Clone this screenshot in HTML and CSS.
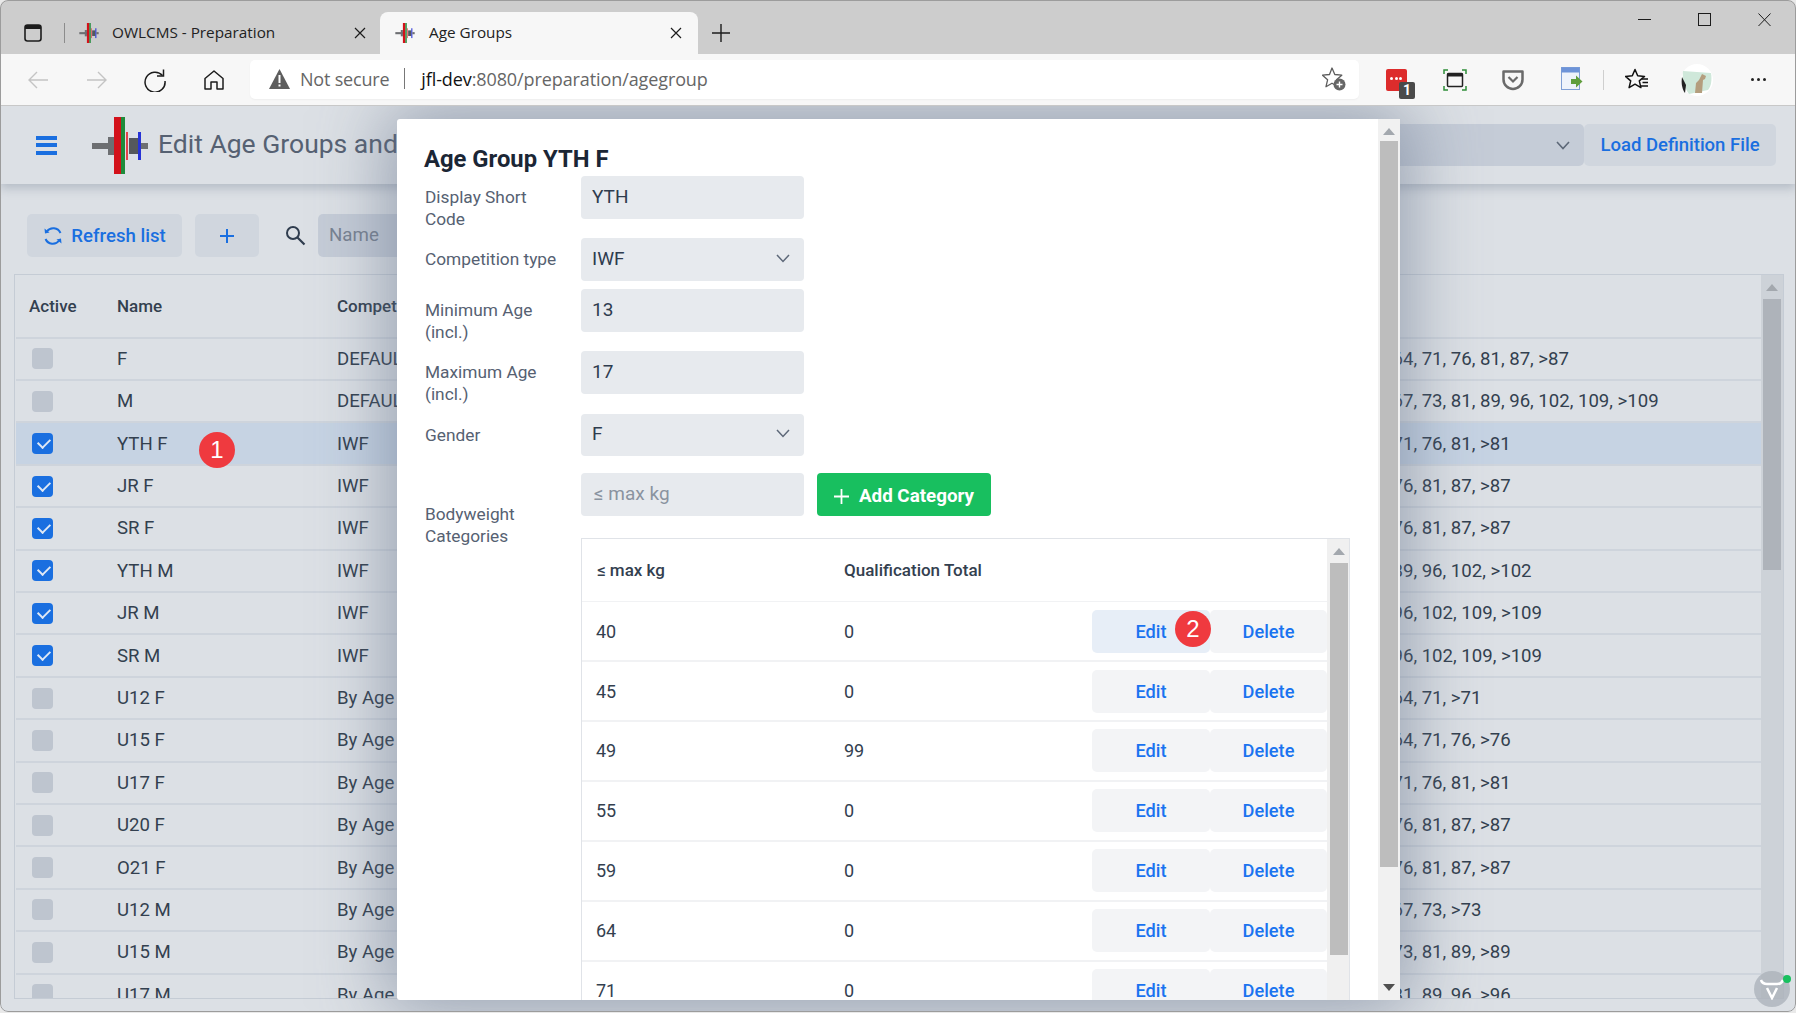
FILE: index.html
```html
<!DOCTYPE html>
<html lang="en">
<head>
<meta charset="utf-8">
<title>Age Groups</title>
<link rel="stylesheet" href="styles.css">
</head>
<body>
<svg class="defs" width="0" height="0" aria-hidden="true">
  <symbol id="logo" viewBox="0 0 56 57">
    <rect x="0" y="26" width="22" height="6" fill="#6d6f72"/>
    <rect x="16" y="20" width="6" height="18" fill="#6d6f72"/>
    <rect x="22" y="0" width="7" height="57" fill="#d3111a"/>
    <rect x="29" y="0" width="4" height="57" fill="#1f8b3a"/>
    <rect x="34" y="15" width="2" height="28" fill="#e2434a"/>
    <rect x="37" y="21" width="9" height="16" fill="#55585c"/>
    <rect x="46" y="15" width="3" height="28" fill="#2733d6"/>
    <rect x="49" y="26" width="7" height="6" fill="#6d6f72"/>
  </symbol>
</svg>
<div class="window">
  <header class="tabstrip">
    <svg class="sidebar-icon" width="18" height="18" viewBox="0 0 18 18"><rect x="1" y="1" width="16" height="16" rx="2.5" fill="none" stroke="#1c1c1c" stroke-width="1.6"/><rect x="1" y="1" width="16" height="4" fill="#1c1c1c"/></svg>
    <span class="tab-sep"></span>
    <div class="tab">
      <svg class="favicon" viewBox="0 0 56 57"><use href="#logo"/></svg>
      <span class="tab-title">OWLCMS - Preparation</span>
      <svg class="tab-close" width="12" height="12" viewBox="0 0 12 12"><path d="M1 1l10 10M11 1L1 11" stroke="#1c1c1c" stroke-width="1.2"/></svg>
    </div>
    <div class="tab tab-active">
      <svg class="favicon" viewBox="0 0 56 57"><use href="#logo"/></svg>
      <span class="tab-title">Age Groups</span>
      <svg class="tab-close" width="12" height="12" viewBox="0 0 12 12"><path d="M1 1l10 10M11 1L1 11" stroke="#1c1c1c" stroke-width="1.2"/></svg>
    </div>
    <svg class="new-tab" width="18" height="18" viewBox="0 0 18 18"><path d="M9 0v18M0 9h18" stroke="#1c1c1c" stroke-width="1.4"/></svg>
    <div class="win-controls">
      <svg width="13" height="14" viewBox="0 0 13 14"><path d="M0 6.5h13" stroke="#1c1c1c" stroke-width="1"/></svg>
      <svg width="13" height="14" viewBox="0 0 13 14"><rect x=".5" y=".5" width="12" height="12" fill="none" stroke="#1c1c1c" stroke-width="1"/></svg>
      <svg width="13" height="14" viewBox="0 0 13 14"><path d="M.5.5l12 12.5M12.5.5L.5 13" stroke="#1c1c1c" stroke-width="1"/></svg>
    </div>
  </header>

  <nav class="toolbar">
    <div class="nav-slots">
      <span class="slot"><svg width="22" height="20" viewBox="0 0 22 20"><path d="M21 10H2M10 2l-8 8 8 8" fill="none" stroke="#c4c4c4" stroke-width="1.4"/></svg></span>
      <span class="slot"><svg width="22" height="20" viewBox="0 0 22 20"><path d="M1 10h19M12 2l8 8-8 8" fill="none" stroke="#c4c4c4" stroke-width="1.4"/></svg></span>
      <span class="slot"><svg width="24" height="24" viewBox="0 0 24 24"><path d="M19.5 7.5A10 10 0 1 0 22 13" fill="none" stroke="#1c1c1c" stroke-width="1.5"/><path d="M20.5 1.5v6.500h-6.500" fill="none" stroke="#1c1c1c" stroke-width="1.5"/></svg></span>
      <span class="slot"><svg width="20" height="22" viewBox="0 0 20 22"><path d="M1 9.500L10 2l9 7.500V20h-6v-7H7v7H1z" fill="none" stroke="#1c1c1c" stroke-width="1.500" stroke-linejoin="round"/></svg></span>
    </div>
    <div class="address">
      <svg class="warn" width="21" height="20" viewBox="0 0 21 20"><path d="M10.500 0L21 20H0z" fill="#5d5d5d"/><rect x="9.500" y="6" width="2" height="8" fill="#fff"/><rect x="9.500" y="15.500" width="2" height="2" fill="#fff"/></svg>
      <span class="not-secure">Not secure</span>
      <span class="addr-sep"></span>
      <span class="url"><b>jfl-dev</b>:8080/preparation/agegroup</span>
      <svg class="star-add" width="24" height="24" viewBox="0 0 24 24"><path d="M10 1l2.800 6.500 7 .7-5.300 4.600 1.600 6.900L10 16.200 4 19.700l1.600-6.900L.5 8.200l7-.7z" fill="none" stroke="#5d5d5d" stroke-width="1.300" stroke-linejoin="round"/><circle cx="17.500" cy="17.500" r="6" fill="#666"/><path d="M17.500 14.500v6M14.500 17.500h6" stroke="#fff" stroke-width="1.400"/></svg>
    </div>
    <div class="ext-slots">
      <span class="slot">
        <span class="lastpass"><i></i><i></i><i></i></span>
        <span class="lp-badge">1</span>
      </span>
      <span class="slot slot-shot"><svg width="24" height="22" viewBox="0 0 24 22"><path d="M1 5V1h4M19 1h4v4M23 17v4h-4M5 21H1v-4" fill="none" stroke="#2f8f3a" stroke-width="1.500"/><rect x="4.500" y="4.500" width="15" height="13" rx="1" fill="none" stroke="#222" stroke-width="1.500"/><rect x="4.500" y="4" width="15" height="3.500" fill="#222"/></svg></span>
      <span class="slot"><svg width="22" height="22" viewBox="0 0 22 22"><path d="M1.500 2.500h19v8a9.500 9.500 0 0 1-19 0z" fill="none" stroke="#6a6a6a" stroke-width="2.500" stroke-linejoin="round"/><path d="M6.500 8l4.500 4.500L15.500 8" fill="none" stroke="#6a6a6a" stroke-width="2.200"/></svg></span>
      <span class="slot"><svg width="22" height="26" viewBox="0 0 22 26"><rect x=".5" y=".5" width="18" height="22" fill="#eef3fb" stroke="#7f9fd6"/><rect x=".5" y=".5" width="18" height="5" fill="#6d93d8"/><path d="M10 12h5V8.500l6.500 6-6.500 6V17h-5z" fill="#5f9e3d"/></svg></span>
      <span class="tool-sep"></span>
      <span class="slot slot-star"><svg width="24" height="24" viewBox="0 0 24 24"><path d="M10 1.500l2.700 6.300 6.800.6-5.200 4.500 1.600 6.700L10 16.200l-5.900 3.400 1.600-6.700L.5 8.400l6.800-.6z" fill="none" stroke="#111" stroke-width="1.500" stroke-linejoin="round"/><path d="M17 11h6M17.500 14.500h5.500M15.500 18h7.500" stroke="#111" stroke-width="1.300"/></svg></span>
      <span class="slot slot-avatar"><svg width="34" height="32" viewBox="0 0 34 32"><ellipse cx="17" cy="16" rx="16" ry="16" fill="#fff"/><path d="M3 7l28 2c1 6 .5 13-3 17l-19 4C4 24 2 14 3 7z" fill="#cfe8da"/><path d="M22 10l4 2-1 3-2 1-1 13h-7l1-10 3-3z" fill="#b49e7e"/><path d="M2 13l4 8-1 8c-3-4-4-10-3-16z" fill="#222"/></svg></span>
      <span class="slot dots"><i></i><i></i><i></i></span>
    </div>
  </nav>

  <main class="page">
    <section class="appbar">
      <span class="hamburger"><i></i><i></i><i></i></span>
      <svg class="logo" viewBox="0 0 56 57"><use href="#logo"/></svg>
      <h1 class="app-title">Edit Age Groups and</h1>
      <div class="combo"><svg width="14" height="9" viewBox="0 0 14 9"><path d="M1 1l6 6.500L13 1" fill="none" stroke="#5d6878" stroke-width="1.600"/></svg></div>
      <button class="load-btn">Load Definition File</button>
    </section>

    <section class="actions">
      <button class="btn btn-refresh">
        <svg width="20" height="20" viewBox="0 0 20 20"><path d="M3.800 5.500A8 8 0 0 1 17.500 7M16.200 14.500A8 8 0 0 1 2.500 13" fill="none" stroke="#1a6fe0" stroke-width="2"/><path d="M1.500 2.500l.5 5 4.500-1zM18.500 17.500l-.5-5-4.500 1z" fill="#1a6fe0"/></svg>
        Refresh list
      </button>
      <button class="btn btn-add"><svg width="14" height="14" viewBox="0 0 14 14"><path d="M7 0v14M0 7h14" stroke="#1a6fe0" stroke-width="2"/></svg></button>
      <svg class="search" width="21" height="21" viewBox="0 0 21 21"><circle cx="8" cy="8" r="6" fill="none" stroke="#2f3c4e" stroke-width="2"/><path d="M12.500 12.500l7 7" stroke="#2f3c4e" stroke-width="2.200"/></svg>
      <div class="filter">Name</div>
    </section>

    <section class="grid">
      <div class="grid-body">
        <div class="row row-head"><span>Active</span><span>Name</span><span>Competition Type</span><span></span></div>
        <div class="row"><span><i class="check"></i></span><span>F</span><span>DEFAULT</span><span>64, 71, 76, 81, 87, &gt;87</span></div>
        <div class="row"><span><i class="check"></i></span><span>M</span><span>DEFAULT</span><span>67, 73, 81, 89, 96, 102, 109, &gt;109</span></div>
        <div class="row row-selected"><span><i class="check on"></i></span><span>YTH F</span><span>IWF</span><span>71, 76, 81, &gt;81</span><b class="callout callout-one">1</b></div>
        <div class="row"><span><i class="check on"></i></span><span>JR F</span><span>IWF</span><span>76, 81, 87, &gt;87</span></div>
        <div class="row"><span><i class="check on"></i></span><span>SR F</span><span>IWF</span><span>76, 81, 87, &gt;87</span></div>
        <div class="row"><span><i class="check on"></i></span><span>YTH M</span><span>IWF</span><span>89, 96, 102, &gt;102</span></div>
        <div class="row"><span><i class="check on"></i></span><span>JR M</span><span>IWF</span><span>96, 102, 109, &gt;109</span></div>
        <div class="row"><span><i class="check on"></i></span><span>SR M</span><span>IWF</span><span>96, 102, 109, &gt;109</span></div>
        <div class="row"><span><i class="check"></i></span><span>U12 F</span><span>By Age Group</span><span>64, 71, &gt;71</span></div>
        <div class="row"><span><i class="check"></i></span><span>U15 F</span><span>By Age Group</span><span>64, 71, 76, &gt;76</span></div>
        <div class="row"><span><i class="check"></i></span><span>U17 F</span><span>By Age Group</span><span>71, 76, 81, &gt;81</span></div>
        <div class="row"><span><i class="check"></i></span><span>U20 F</span><span>By Age Group</span><span>76, 81, 87, &gt;87</span></div>
        <div class="row"><span><i class="check"></i></span><span>O21 F</span><span>By Age Group</span><span>76, 81, 87, &gt;87</span></div>
        <div class="row"><span><i class="check"></i></span><span>U12 M</span><span>By Age Group</span><span>67, 73, &gt;73</span></div>
        <div class="row"><span><i class="check"></i></span><span>U15 M</span><span>By Age Group</span><span>73, 81, 89, &gt;89</span></div>
        <div class="row"><span><i class="check"></i></span><span>U17 M</span><span>By Age Group</span><span>81, 89, 96, &gt;96</span></div>
      </div>
      <div class="grid-scroll">
        <svg class="arrow" width="12" height="7" viewBox="0 0 12 7"><path d="M6 0l6 7H0z" fill="#a3a8ae"/></svg>
        <span class="grid-thumb"></span>
      </div>
    </section>

    <div class="dev-bubble">
      <svg width="24" height="22" viewBox="0 0 24 22"><path d="M1 2c1 3 3 4 6 4h10c3 0 5-1 6-4" fill="none" stroke="#fff" stroke-width="2.500"/><path d="M7 10l5 10 5-10" fill="none" stroke="#fff" stroke-width="2.500"/></svg>
      <i class="dev-dot"></i>
    </div>

    <aside class="dialog">
      <div class="dialog-body">
        <h2 class="dialog-title">Age Group YTH F</h2>
        <div class="form-row"><label>Display Short Code</label><div class="field">YTH</div></div>
        <div class="form-row"><label>Competition type</label><div class="field select">IWF<svg width="14" height="9" viewBox="0 0 14 9"><path d="M1 1l6 6.500L13 1" fill="none" stroke="#5d6878" stroke-width="1.500"/></svg></div></div>
        <div class="form-row"><label>Minimum Age (incl.)</label><div class="field">13</div></div>
        <div class="form-row"><label>Maximum Age (incl.)</label><div class="field">17</div></div>
        <div class="form-row form-row-gap"><label>Gender</label><div class="field select">F<svg width="14" height="9" viewBox="0 0 14 9"><path d="M1 1l6 6.500L13 1" fill="none" stroke="#5d6878" stroke-width="1.500"/></svg></div></div>
        <div class="form-row form-row-last">
          <label class="label-cat">Bodyweight Categories</label>
          <div class="cat-col">
            <div class="cat-add">
              <div class="field placeholder">≤ max kg</div>
              <button class="add-btn"><svg width="15" height="15" viewBox="0 0 15 15"><path d="M7.500 0v15M0 7.500h15" stroke="#fff" stroke-width="1.800"/></svg>Add Category</button>
            </div>
            <div class="cat-table">
              <div class="cat-body">
                <div class="cat-row cat-head"><span>≤ max kg</span><span>Qualification Total</span></div>
                <div class="cat-row"><span>40</span><span>0</span><div class="cat-actions"><button class="row-btn row-btn-hover">Edit<b class="callout callout-two">2</b></button><button class="row-btn">Delete</button></div></div>
                <div class="cat-row"><span>45</span><span>0</span><div class="cat-actions"><button class="row-btn">Edit</button><button class="row-btn">Delete</button></div></div>
                <div class="cat-row"><span>49</span><span>99</span><div class="cat-actions"><button class="row-btn">Edit</button><button class="row-btn">Delete</button></div></div>
                <div class="cat-row"><span>55</span><span>0</span><div class="cat-actions"><button class="row-btn">Edit</button><button class="row-btn">Delete</button></div></div>
                <div class="cat-row"><span>59</span><span>0</span><div class="cat-actions"><button class="row-btn">Edit</button><button class="row-btn">Delete</button></div></div>
                <div class="cat-row"><span>64</span><span>0</span><div class="cat-actions"><button class="row-btn">Edit</button><button class="row-btn">Delete</button></div></div>
                <div class="cat-row"><span>71</span><span>0</span><div class="cat-actions"><button class="row-btn">Edit</button><button class="row-btn">Delete</button></div></div>
              </div>
              <div class="cat-scroll">
                <svg class="arrow" width="12" height="7" viewBox="0 0 12 7"><path d="M6 0l6 7H0z" fill="#a3a8ae"/></svg>
                <span class="cat-thumb"></span>
              </div>
            </div>
          </div>
        </div>
      </div>
      <div class="dialog-scroll">
        <svg class="arrow" width="12" height="7" viewBox="0 0 12 7"><path d="M6 0l6 7H0z" fill="#a3a8ae"/></svg>
        <span class="dialog-thumb"></span>
        <svg class="arrow-down" width="12" height="7" viewBox="0 0 12 7"><path d="M0 0h12L6 7z" fill="#505050"/></svg>
      </div>
    </aside>
  </main>
</div>
</body>
</html>
```

FILE: styles.css
```css
* { box-sizing: border-box; }
html, body { margin: 0; padding: 0; height: 100%; overflow: hidden; background: #e9e9e9; }
body { font-family: Roboto, "Liberation Sans", sans-serif; color: #2f3c4e; }
.defs { position: absolute; }
button { font-family: inherit; border: 0; cursor: pointer; }

.window { position: relative; width: 1796px; height: 1012px; border-radius: 8px; overflow: hidden; display: flex; flex-direction: column; }
.window::after { content: ""; position: absolute; inset: 0; border: 1px solid #9c9c9c; border-radius: 8px; pointer-events: none; z-index: 9; }

/* tabs */
.tabstrip { height: 54px; flex: none; background: #cdcdcd; display: flex; align-items: flex-end; padding-left: 24px; position: relative; font-family: "Open Sans", sans-serif; font-size: 15.300px; color: #222; }
.sidebar-icon { align-self: flex-start; margin-top: 24px; }
.tab-sep { align-self: flex-start; width: 1px; height: 20px; background: #8c8c8c; margin: 23px 14px 0 22px; }
.tab { width: 318px; height: 42px; display: flex; align-items: center; padding: 0 16px 0 0; }
.tab:first-of-type { width: 301px; padding-right: 14px; }
.tab:first-of-type .favicon { margin-right: 13px; }
.tab-active { background: #f7f7f7; border-radius: 8px 8px 0 0; padding-left: 15px; }
.favicon { width: 20px; height: 20px; flex: none; margin-right: 14px; }
.tab-title { flex: 1; white-space: nowrap; padding-bottom: 2px; }
.tab-close { flex: none; }
.new-tab { align-self: flex-start; margin: 24px 0 0 14px; }
.win-controls { align-self: flex-start; margin: 13px 25px 0 auto; display: flex; gap: 47px; }

/* toolbar */
.toolbar { height: 52px; flex: none; background: #f7f7f7; border-bottom: 1px solid #c8c8c8; display: flex; align-items: center; padding: 0 9px; }
.nav-slots { display: flex; }
.slot { width: 58.500px; height: 40px; display: flex; align-items: center; justify-content: center; position: relative; flex: none; }
.address { flex: none; width: 1109px; height: 39px; margin-left: 7px; background: #fff; border-radius: 5px; display: flex; align-items: center; padding: 0 0 2px 19px; font-family: "Open Sans", sans-serif; font-size: 18px; color: #666; box-shadow: 0 1px 2px rgba(0,0,0,.04); }
.warn { flex: none; margin-right: 10px; }
.not-secure { letter-spacing: -.2px; }
.addr-sep { width: 1px; height: 21px; background: #777; margin: 0 16px 0 15px; }
.url b { font-weight: 400; color: #111; }
.url { letter-spacing: -.1px; }
.star-add { margin-left: auto; margin-right: 13px; }
.ext-slots { display: flex; align-items: center; margin-left: 9px; }
.lastpass { width: 21px; height: 22px; background: #dd2c2c; border-radius: 2px; display: flex; align-items: center; justify-content: center; gap: 1.500px; padding-bottom: 2px; margin-right: 2px; }
.lastpass i { width: 3px; height: 3px; border-radius: 50%; background: #fff; }
.lp-badge { position: absolute; left: 31px; top: 22px; width: 16px; height: 17px; background: #4a4a4a; border-radius: 2px; color: #fff; font-size: 14px; font-weight: 700; line-height: 17px; text-align: center; }
.slot-shot { margin-left: -1px; }
.tool-sep { width: 1px; height: 20px; background: #cfcfcf; margin: 0 0 0 2px; }
.slot-star { margin-left: 4px; }
.slot-avatar { margin-left: 1px; }
.dots { gap: 3px; margin-left: 3px; }
.dots i { width: 3px; height: 3px; border-radius: 50%; background: #222; }

/* page */
.page { position: relative; flex: 1; min-height: 0; background: #dce0e5; overflow: hidden; }

.appbar { height: 78px; display: flex; align-items: center; padding-left: 36px; background: #dce0e5; box-shadow: 0 4px 10px rgba(100,115,135,.35); position: relative; }
.hamburger { width: 21px; display: flex; flex-direction: column; gap: 3.500px; flex: none; }
.hamburger i { height: 4px; background: #1a6fe0; }
.logo { width: 56px; height: 57px; margin-left: 35px; flex: none; }
.app-title { margin: 0 761px 0 10px; font-size: 26.500px; font-weight: 400; color: #566172; white-space: nowrap; width: 239px; overflow: hidden; flex: none; padding-bottom: 4px; }
.combo { width: 426px; height: 42px; background: #c5ccd7; border-radius: 5px; display: flex; align-items: center; justify-content: flex-end; padding-right: 14px; flex: none; }
.load-btn { width: 192px; height: 42px; background: #d0d6de; border-radius: 5px; color: #1a6fe0; font-size: 18.500px; font-weight: 500; flex: none; padding: 0; }

.actions { display: flex; align-items: center; padding-left: 27px; margin-top: 30px; height: 43px; }
.btn { height: 43px; background: #d0d6de; border-radius: 5px; color: #1a6fe0; font-size: 18.600px; font-weight: 500; display: flex; align-items: center; justify-content: center; flex: none; padding: 0; }
.btn-refresh { width: 155px; gap: 8px; }
.btn-add { width: 64px; margin-left: 13px; }
.search { margin-left: 26px; flex: none; }
.filter { margin-left: 12px; width: 300px; height: 43px; background: #c5ccd7; border-radius: 5px; padding-left: 11px; line-height: 43px; font-size: 18.700px; color: #788291; }

.grid { margin: 17px 12px 0 14px; height: 725px; border: 1px solid #c5ccd5; display: flex; overflow: hidden; }
.grid-body { flex: 1; min-width: 0; overflow: hidden; padding-left: 1px; }
.row { display: grid; grid-template-columns: 85px 220px 1055.500px 1fr; align-items: center; height: 42.400px; padding-left: 16px; border-bottom: 2px solid #ced4dc; font-size: 18.600px; color: #33404f; position: relative; white-space: nowrap; }
.row-head { height: 63.700px; font-size: 17px; font-weight: 500; padding-left: 13px; grid-template-columns: 88px 220px 1054px 1fr; }
.row-selected { background: #c6d3e3; }
.check { display: block; width: 21px; height: 21px; border-radius: 4px; background: #bec5cf; position: relative; }
.check.on { background: #1a6fe0; }
.check.on::after { content: ""; position: absolute; left: 5.500px; top: 5px; width: 10px; height: 6px; border-left: 2px solid #dfe8f5; border-bottom: 2px solid #dfe8f5; transform: rotate(-45deg); }
.callout { position: absolute; width: 36px; height: 36px; border-radius: 50%; background: #ef3a3f; color: #fff; font-size: 24px; font-weight: 500; line-height: 36px; text-align: center; z-index: 2; font-family: "Liberation Sans", sans-serif; }
.callout-one { left: 183px; top: 9px; }
.callout-two { left: 83px; top: 1px; }

.grid-scroll { width: 22px; flex: none; background: #cdd2d8; position: relative; display: flex; flex-direction: column; align-items: center; padding-top: 9px; }
.grid-thumb { width: 18px; height: 271px; background: #aeb3ba; margin-top: 8px; }
.arrow { flex: none; display: block; }

.dev-bubble { position: absolute; left: 1754px; top: 865px; width: 36px; height: 36px; border-radius: 50%; background: rgba(170,176,184,.75); display: flex; align-items: center; justify-content: center; z-index: 3; }
.dev-dot { position: absolute; right: -1px; top: 4px; width: 8px; height: 8px; border-radius: 50%; background: #19c05f; }

/* dialog */
.dialog { position: absolute; left: 397px; top: 13px; width: 1003px; height: 881px; background: #fff; display: flex; box-shadow: 0 0 70px 10px rgba(95,110,135,.55); z-index: 2; overflow: hidden; border-radius: 3px 0 0 3px; }
.dialog-body { flex: 1; min-width: 0; padding: 27px 0 0 27px; overflow: hidden; }
.dialog-title { margin: 0 0 3px; height: 27px; line-height: 27px; font-size: 23.800px; font-weight: 700; color: #1b2635; }
.form-row { display: flex; margin-bottom: 8.300px; }
.form-row label { width: 157px; flex: none; padding: 10px 15px 0 1px; font-size: 17.300px; line-height: 22px; color: #566172; }
.form-row-gap { margin-bottom: 17px; }
.form-row-last { margin-bottom: 0; }
.form-row label.label-cat { padding-top: 30px; }
.field { width: 223px; height: 42.500px; background: #e7eaee; border-radius: 4px; padding: 0 14px 2px 11px; font-size: 19px; color: #2f3c4e; display: flex; align-items: center; justify-content: space-between; flex: none; }
.field.placeholder { color: #8a93a0; padding-left: 13px; }
.cat-col { width: 769px; flex: none; }
.cat-add { display: flex; gap: 13px; }
.add-btn { width: 174px; height: 43px; background: #18bf5f; border-radius: 4px; color: #fff; font-size: 18.800px; font-weight: 700; display: flex; align-items: center; justify-content: center; gap: 10px; padding: 3px 0 0; }
.cat-table { margin-top: 22px; height: 500px; border: 1px solid #e0e3e8; display: flex; }
.cat-body { flex: 1; min-width: 0; overflow: hidden; }
.cat-row { height: 59.900px; display: grid; grid-template-columns: 248px 200px 1fr; align-items: center; padding-left: 14px; border-bottom: 2px solid #f1f2f4; font-size: 18px; color: #33404f; }
.cat-head { height: 63px; font-size: 17px; font-weight: 500; border-bottom-width: 1px; }
.cat-head span:first-child { padding-left: 1px; }
.cat-actions { display: flex; justify-content: flex-end; }
.row-btn { position: relative; height: 43px; width: 118px; padding: 0; background: #f3f4f6; color: #1a73f0; font-size: 18.200px; font-weight: 500; border-radius: 5px; }
.row-btn + .row-btn { width: 117px; }
.row-btn-hover { background: #e7eef7; }
.cat-scroll { width: 22px; flex: none; background: #f0f0f0; display: flex; flex-direction: column; align-items: center; padding-top: 9px; border-left: 1px solid #f0f0f0; }
.cat-thumb { width: 18px; height: 392px; background: #bdbdbd; margin-top: 8px; flex: none; }

.dialog-scroll { width: 22px; flex: none; background: #f1f1f1; display: flex; flex-direction: column; align-items: center; padding-top: 9px; position: relative; }
.dialog-thumb { width: 18px; height: 726px; background: #bdbdbd; margin-top: 6px; flex: none; }
.arrow-down { position: absolute; bottom: 9px; left: 5px; }
```
